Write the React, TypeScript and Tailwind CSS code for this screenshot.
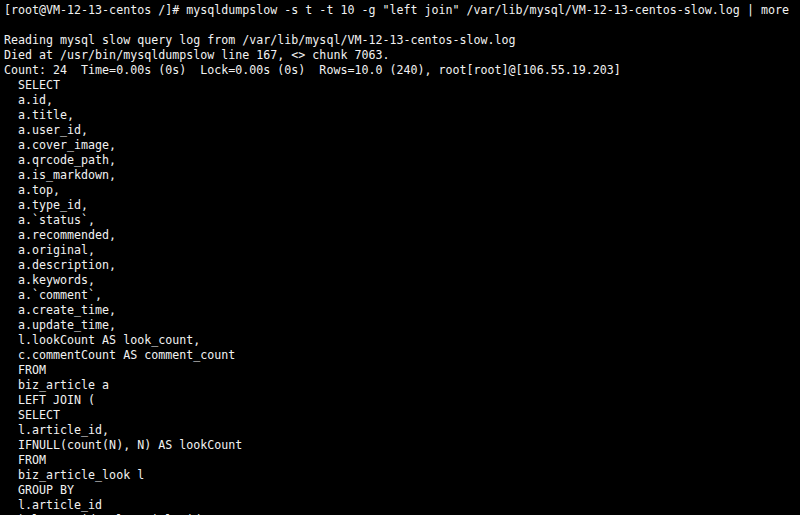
import React from "react";

const lines = [
  '[root@VM-12-13-centos /]# mysqldumpslow -s t -t 10 -g "left join" /var/lib/mysql/VM-12-13-centos-slow.log | more',
  "",
  "Reading mysql slow query log from /var/lib/mysql/VM-12-13-centos-slow.log",
  "Died at /usr/bin/mysqldumpslow line 167, <> chunk 7063.",
  "Count: 24  Time=0.00s (0s)  Lock=0.00s (0s)  Rows=10.0 (240), root[root]@[106.55.19.203]",
  "  SELECT",
  "  a.id,",
  "  a.title,",
  "  a.user_id,",
  "  a.cover_image,",
  "  a.qrcode_path,",
  "  a.is_markdown,",
  "  a.top,",
  "  a.type_id,",
  "  a.`status`,",
  "  a.recommended,",
  "  a.original,",
  "  a.description,",
  "  a.keywords,",
  "  a.`comment`,",
  "  a.create_time,",
  "  a.update_time,",
  "  l.lookCount AS look_count,",
  "  c.commentCount AS comment_count",
  "  FROM",
  "  biz_article a",
  "  LEFT JOIN (",
  "  SELECT",
  "  l.article_id,",
  "  IFNULL(count(N), N) AS lookCount",
  "  FROM",
  "  biz_article_look l",
  "  GROUP BY",
  "  l.article_id",
  "  ) l ON a.id = l.article_id",
];

export default function App() {
  return (
    <div className="w-[800px] h-[515px] overflow-hidden bg-black pl-[4px] pt-[3px]">
      <pre
        className="m-0 whitespace-pre text-[11.65px] leading-[15px] text-[#f2f2f2]"
        style={{ fontFamily: '"DejaVu Sans Mono", monospace' }}
      >
        {lines.map((l, i) => (
          <div key={i} className="h-[15px]">
            {l}
          </div>
        ))}
      </pre>
    </div>
  );
}
